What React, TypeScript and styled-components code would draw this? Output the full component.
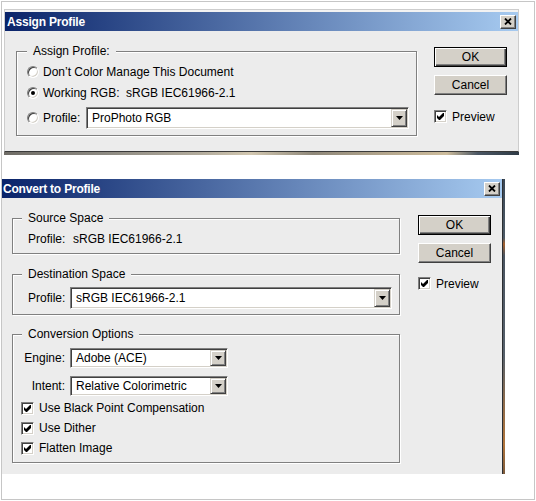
import React from "react";
import styled, { createGlobalStyle } from "styled-components";

const GlobalStyle = createGlobalStyle`
  html, body { margin: 0; padding: 0; background: #fff; }
  body {
    padding: 1px;
    font-family: "Liberation Sans", Arial, sans-serif;
    font-size: 12px;
    color: #000;
  }
`;

const FACE = "#d4d0c8";
const PANEL = "#ececec";

const Frame = styled.div`
  width: 534px;
  height: 499px;
  box-sizing: border-box;
  border: 1px solid #c6c6c6;
  background: #fff;
  display: flex;
  flex-direction: column;
  align-items: flex-start;
`;

const AssignDialog = styled.section`
  margin: 7px 0 0 2px;
  width: 515px;
  height: 143px;
  box-sizing: border-box;
  border: 1px solid #cdcdcd;
  border-bottom-color: #3a3a3a;
  padding-top: 2px;
  background: #f2f2f2;
  display: flex;
  flex-direction: column;
`;

const PhotoStrip = styled.div`
  margin-left: 2px;
  width: 515px;
  height: 3px;
  background: linear-gradient(
    to right,
    #6f6c66 0%,
    #8d8a82 20%,
    #b2ab9c 38%,
    #d2c7b0 48%,
    #8f887a 60%,
    #b6a88e 75%,
    #cdbc9c 86%,
    #4a5663 92%,
    #2f3b46 100%
  );
`;

const BottomRow = styled.div`
  margin-top: 24px;
  display: flex;
  align-items: stretch;
`;

const ConvertDialog = styled.section`
  width: 501px;
  box-sizing: border-box;
  border-right: 1px solid #2c2f33;
  background: ${PANEL};
  display: flex;
  flex-direction: column;
`;

const SideStrip = styled.div`
  width: 2px;
  background: linear-gradient(
    to bottom,
    #3b4754 0%,
    #4d5a66 20%,
    #a5602c 22%,
    #4a5460 26%,
    #56606a 60%,
    #8a6a4c 75%,
    #b0743a 90%,
    #7c5a3c 100%
  );
`;

const TitleBar = styled.header<{ $pl: number }>`
  height: 19px;
  flex: none;
  box-sizing: border-box;
  display: flex;
  align-items: center;
  justify-content: space-between;
  padding: 0 2px 0 ${(p) => p.$pl}px;
  background: linear-gradient(to right, #0a246a, #a6caf0);
`;

const TitleText = styled.h1`
  margin: 0;
  font-size: 12px;
  font-weight: bold;
  color: #fff;
  letter-spacing: -0.2px;
  white-space: nowrap;
`;

const CloseButton = styled.span`
  width: 16px;
  height: 14px;
  box-sizing: border-box;
  background: ${FACE};
  border: 1px solid;
  border-color: #fff #404040 #404040 #fff;
  box-shadow: inset -1px -1px 0 #808080;
  display: flex;
  align-items: center;
  justify-content: center;
`;

const DialogBody = styled.div<{ $h: number; $pt: number; $pl: number }>`
  height: ${(p) => p.$h}px;
  box-sizing: border-box;
  padding: ${(p) => p.$pt}px 0 0 ${(p) => p.$pl}px;
  background: ${PANEL};
  display: flex;
  align-items: flex-start;
`;

const GroupColumn = styled.div`
  display: flex;
  flex-direction: column;
`;

const Group = styled.fieldset<{ $width: number; $pad: string; $mt?: number }>`
  margin: ${(p) => p.$mt ?? 0}px 0 0 0;
  min-width: 0;
  width: ${(p) => p.$width}px;
  box-sizing: border-box;
  padding: ${(p) => p.$pad};
  border: 1px solid #808080;
  box-shadow: 1px 1px 0 #fff, inset 1px 1px 0 #fff;
`;

const Legend = styled.legend<{ $shift: number }>`
  padding: 0 6px;
  margin-left: ${(p) => p.$shift}px;
  line-height: 14px;
  background: ${PANEL};
  white-space: nowrap;
`;

const Row = styled.div<{ $h: number; $mt?: number }>`
  height: ${(p) => p.$h}px;
  margin-top: ${(p) => p.$mt ?? 0}px;
  display: flex;
  align-items: center;
  white-space: nowrap;
`;

const Label = styled.span<{ $w: number; $right?: boolean; $gap?: number }>`
  width: ${(p) => p.$w}px;
  flex: none;
  text-align: ${(p) => (p.$right ? "right" : "left")};
  margin-right: ${(p) => p.$gap ?? 0}px;
`;

const RadioMark = styled.span<{ $checked?: boolean }>`
  position: relative;
  width: 12px;
  height: 12px;
  flex: none;
  box-sizing: border-box;
  border-radius: 50%;
  background: #fff;
  border: 1px solid;
  border-color: #808080 #fff #fff #808080;
  box-shadow: inset 1px 1px 0 #404040, inset -1px -1px 0 ${FACE};
  margin-right: 4px;
  &::after {
    content: "";
    display: ${(p) => (p.$checked ? "block" : "none")};
    position: absolute;
    left: 3px;
    top: 3px;
    width: 4px;
    height: 4px;
    border-radius: 50%;
    background: #000;
  }
`;

const CheckBox = styled.span<{ $gap: number }>`
  width: 13px;
  height: 13px;
  flex: none;
  box-sizing: border-box;
  background: #fff;
  border: 1px solid;
  border-color: #808080 #fff #fff #808080;
  box-shadow: inset 1px 1px 0 #404040, inset -1px -1px 0 ${FACE};
  display: flex;
  align-items: center;
  justify-content: center;
  margin-right: ${(p) => p.$gap}px;
`;

const ComboBox = styled.div<{ $w: number; $h: number }>`
  width: ${(p) => p.$w}px;
  height: ${(p) => p.$h}px;
  flex: none;
  box-sizing: border-box;
  background: #fff;
  border: 1px solid;
  border-color: #808080 #fff #fff #808080;
  box-shadow: inset 1px 1px 0 #404040, inset -1px -1px 0 ${FACE};
  padding: 1px;
  display: flex;
`;

const ComboText = styled.span`
  flex: 1;
  padding-left: 4px;
  display: flex;
  align-items: center;
`;

const ComboArrow = styled.span`
  width: 16px;
  flex: none;
  box-sizing: border-box;
  background: ${FACE};
  border: 1px solid;
  border-color: ${FACE} #404040 #404040 ${FACE};
  box-shadow: inset 1px 1px 0 #fff, inset -1px -1px 0 #808080;
  display: flex;
  align-items: center;
  justify-content: center;
`;

const ButtonColumn = styled.div<{ $ml: number; $mt: number }>`
  margin: ${(p) => p.$mt}px 0 0 ${(p) => p.$ml}px;
  display: flex;
  flex-direction: column;
  gap: 8px;
`;

const Button = styled.button<{ $default?: boolean }>`
  width: 73px;
  height: 20px;
  box-sizing: border-box;
  padding: 0;
  font: inherit;
  color: #000;
  background: ${FACE};
  border: 1px solid;
  border-color: ${(p) => (p.$default ? "#000" : "#fff #404040 #404040 #fff")};
  box-shadow: ${(p) =>
    p.$default
      ? "inset 1px 1px 0 #fff, inset -1px -1px 0 #404040, inset -2px -2px 0 #808080"
      : "inset -1px -1px 0 #808080, inset 1px 1px 0 " + FACE};
  display: flex;
  align-items: center;
  justify-content: center;
`;

const PreviewRow = styled.div<{ $mt: number }>`
  margin-top: ${(p) => p.$mt}px;
  height: 13px;
  display: flex;
  align-items: center;
`;

const CheckGlyph = () => (
  <svg width="7" height="7" viewBox="0 0 7 7">
    <path d="M0 2 L2 4 L6 0 L7 0 L7 3 L3 7 L2 7 L0 5 Z" fill="#000" />
  </svg>
);

const ArrowGlyph = () => (
  <svg width="7" height="4" viewBox="0 0 7 4">
    <path d="M0 0 H7 L3.5 4 Z" fill="#000" />
  </svg>
);

const CloseGlyph = () => (
  <svg width="8" height="7" viewBox="0 0 8 7">
    <path d="M1 0.5 L7 6.5 M7 0.5 L1 6.5" stroke="#000" strokeWidth="1.8" />
  </svg>
);

const Radio = ({ checked }: { checked?: boolean }) => <RadioMark $checked={checked} />;

const Check = ({ gap = 5 }: { gap?: number }) => (
  <CheckBox $gap={gap}>
    <CheckGlyph />
  </CheckBox>
);

const Combo = ({ w, h, value }: { w: number; h: number; value: string }) => (
  <ComboBox $w={w} $h={h}>
    <ComboText>{value}</ComboText>
    <ComboArrow>
      <ArrowGlyph />
    </ComboArrow>
  </ComboBox>
);

const Title = ({ text, pl }: { text: string; pl: number }) => (
  <TitleBar $pl={pl}>
    <TitleText>{text}</TitleText>
    <CloseButton>
      <CloseGlyph />
    </CloseButton>
  </TitleBar>
);

const Buttons = ({ ml, mt, previewGap }: { ml: number; mt: number; previewGap: number }) => (
  <ButtonColumn $ml={ml} $mt={mt}>
    <Button $default>OK</Button>
    <Button>Cancel</Button>
    <PreviewRow $mt={previewGap}>
      <Check />
      <span>Preview</span>
    </PreviewRow>
  </ButtonColumn>
);

export default function App() {
  return (
    <>
      <GlobalStyle />
      <Frame>
        <AssignDialog>
          <Title text="Assign Profile" pl={2} />
          <DialogBody $h={120} $pt={13} $pl={11}>
            <Group $width={401} $pad="3px 7px 6px 10px">
              <Legend $shift={0}>Assign Profile:</Legend>
              <Row $h={21}>
                <Radio />
                <span>Don’t Color Manage This Document</span>
              </Row>
              <Row $h={21}>
                <Radio checked />
                <Label $w={83}>Working RGB:</Label>
                <span>sRGB IEC61966-2.1</span>
              </Row>
              <Row $h={22} $mt={4}>
                <Radio />
                <Label $w={43}>Profile:</Label>
                <Combo w={323} h={22} value="ProPhoto RGB" />
              </Row>
            </Group>
            <Buttons ml={17} mt={3} previewGap={7} />
          </DialogBody>
        </AssignDialog>
        <PhotoStrip />
        <BottomRow>
          <ConvertDialog>
            <Title text="Convert to Profile" pl={1} />
            <DialogBody $h={276} $pt={13} $pl={10}>
              <GroupColumn>
                <Group $width={388} $pad="4px 8px 4px 15px">
                  <Legend $shift={-6}>Source Space</Legend>
                  <Row $h={20}>
                    <Label $w={45}>Profile:</Label>
                    <span>sRGB IEC61966-2.1</span>
                  </Row>
                </Group>
                <Group $width={388} $pad="6px 8px 5px 15px" $mt={13}>
                  <Legend $shift={-6}>Destination Space</Legend>
                  <Row $h={22}>
                    <Label $w={42}>Profile:</Label>
                    <Combo w={322} h={22} value="sRGB IEC61966-2.1" />
                  </Row>
                </Group>
                <Group $width={388} $pad="7px 8px 4px 8px" $mt={12}>
                  <Legend $shift={1}>Conversion Options</Legend>
                  <Row $h={20}>
                    <Label $w={44} $right $gap={5}>
                      Engine:
                    </Label>
                    <Combo w={158} h={20} value="Adobe (ACE)" />
                  </Row>
                  <Row $h={20} $mt={8}>
                    <Label $w={44} $right $gap={5}>
                      Intent:
                    </Label>
                    <Combo w={158} h={20} value="Relative Colorimetric" />
                  </Row>
                  <Row $h={20} $mt={2}>
                    <Check gap={5} />
                    <span>Use Black Point Compensation</span>
                  </Row>
                  <Row $h={20}>
                    <Check gap={5} />
                    <span>Use Dither</span>
                  </Row>
                  <Row $h={20}>
                    <Check gap={5} />
                    <span>Flatten Image</span>
                  </Row>
                </Group>
              </GroupColumn>
              <Buttons ml={18} mt={4} previewGap={6} />
            </DialogBody>
          </ConvertDialog>
          <SideStrip />
        </BottomRow>
      </Frame>
    </>
  );
}
